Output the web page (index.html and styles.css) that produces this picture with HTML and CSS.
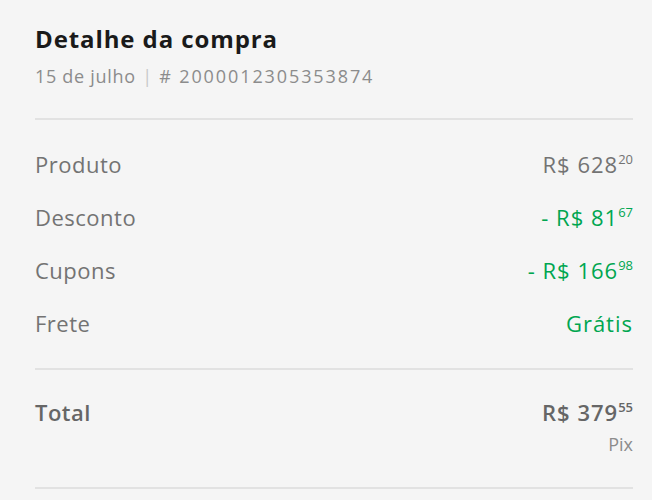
FILE: index.html
```html
<!DOCTYPE html>
<html lang="pt-BR">
<head>
  <meta charset="UTF-8">
  <meta name="viewport" content="width=device-width, initial-scale=1.0">
  <title>Detalhe da compra</title>
  <link rel="stylesheet" href="styles.css">
</head>
<body>
  <div class="detail">
    <div class="header">
      <h1>Detalhe da compra</h1>
      <p class="meta">15 de julho <span class="sep">|</span> <span class="order"># 2000012305353874</span></p>
    </div>

    <div class="summary">
      <div class="row">
        <span class="label">Produto</span>
        <span class="value">R$ 628<sup>20</sup></span>
      </div>
      <div class="row">
        <span class="label">Desconto</span>
        <span class="value green">- R$ 81<sup>67</sup></span>
      </div>
      <div class="row">
        <span class="label">Cupons</span>
        <span class="value green">- R$ 166<sup>98</sup></span>
      </div>
      <div class="row">
        <span class="label">Frete</span>
        <span class="value green">Grátis</span>
      </div>
    </div>

    <div class="total">
      <span class="label">Total</span>
      <div class="total-value">
        <span class="value">R$ 379<sup>55</sup></span>
        <span class="method">Pix</span>
      </div>
    </div>
  </div>
</body>
</html>
```

FILE: styles.css
```css
body {
  font-family: 'Open Sans', 'Liberation Sans', sans-serif;
  background: #f5f5f5;
  margin: 0;
}

.detail {
  padding: 0 19px 0 35px;
}

.header {
  padding: 23px 0 30px;
  border-bottom: 2px solid #e2e2e2;
}

h1 {
  margin: 0;
  font-size: 24px;
  line-height: 32px;
  font-weight: 700;
  letter-spacing: 0.9px;
  color: #1a1a1a;
}

.meta {
  margin: 9px 0 0;
  font-size: 18px;
  line-height: 24px;
  letter-spacing: 0.7px;
  color: #8c8c8c;
}

.sep {
  color: #c8c8c8;
  margin: 0 1px;
}

.order {
  letter-spacing: 1.9px;
}

.summary {
  padding: 18px 0 18px;
  border-bottom: 2px solid #e2e2e2;
}

.row {
  display: flex;
  justify-content: space-between;
  align-items: baseline;
  height: 53px;
  line-height: 53px;
}

.label,
.value {
  font-size: 22px;
  letter-spacing: 0.5px;
  color: #737373;
}

.value {
  letter-spacing: 1px;
}

.green {
  color: #00a650;
}

sup {
  font-size: 13px;
  letter-spacing: 0;
  vertical-align: 9px;
  line-height: 0;
}

.total {
  display: flex;
  justify-content: space-between;
  align-items: flex-start;
  padding: 27px 0 31px;
  border-bottom: 2px solid #e2e2e2;
}

.total .label,
.total .value {
  font-weight: 600;
  color: #666666;
}

.total-value {
  display: flex;
  flex-direction: column;
  align-items: flex-end;
}

.method {
  margin-top: 5px;
  font-size: 18px;
  color: #8c8c8c;
}
```
